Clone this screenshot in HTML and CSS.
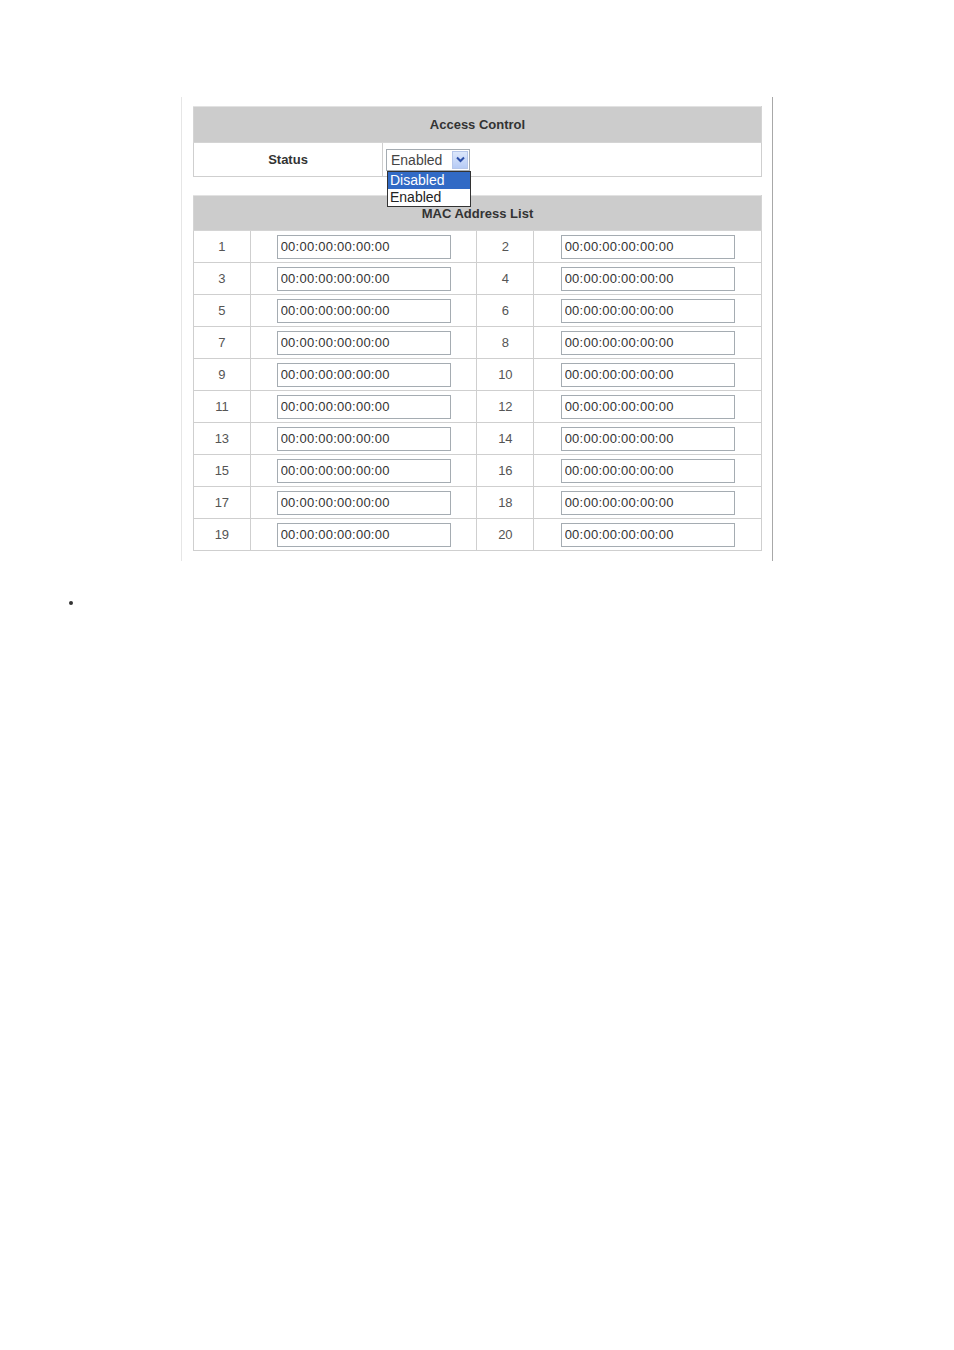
FILE: index.html
```html
<!DOCTYPE html>
<html lang="en">
<head>
    <meta charset="UTF-8">
    <meta name="viewport" content="width=device-width, initial-scale=1.0">
    <title>Access Control</title>
    <link rel="stylesheet" href="styles.css">
</head>
<body>
    <div class="frame">
        <table class="grid status-table">
            <tr>
                <th colspan="2">Access Control</th>
            </tr>
            <tr>
                <td class="label">Status</td>
                <td class="value">
                    <div class="select">
                        <span class="select-text">Enabled</span>
                        <span class="select-btn">
                            <svg width="9" height="7" viewBox="0 0 9 7">
                                <path d="M1 1.5 L4.5 5 L8 1.5" fill="none" stroke="#2b4ea8" stroke-width="2"/>
                            </svg>
                        </span>
                        <div class="select-list">
                            <div class="option selected">Disabled</div>
                            <div class="option">Enabled</div>
                        </div>
                    </div>
                </td>
            </tr>
        </table>

        <table class="grid mac-table">
            <colgroup>
                <col class="c-num">
                <col class="c-mac">
                <col class="c-num">
                <col class="c-mac2">
            </colgroup>
            <thead>
                <tr>
                    <th colspan="4">MAC Address List</th>
                </tr>
            </thead>
            <tbody id="macRows">
                <tr><td>1</td><td><input type="text" value="00:00:00:00:00:00"></td><td>2</td><td><input type="text" value="00:00:00:00:00:00"></td></tr>
                <tr><td>3</td><td><input type="text" value="00:00:00:00:00:00"></td><td>4</td><td><input type="text" value="00:00:00:00:00:00"></td></tr>
                <tr><td>5</td><td><input type="text" value="00:00:00:00:00:00"></td><td>6</td><td><input type="text" value="00:00:00:00:00:00"></td></tr>
                <tr><td>7</td><td><input type="text" value="00:00:00:00:00:00"></td><td>8</td><td><input type="text" value="00:00:00:00:00:00"></td></tr>
                <tr><td>9</td><td><input type="text" value="00:00:00:00:00:00"></td><td>10</td><td><input type="text" value="00:00:00:00:00:00"></td></tr>
                <tr><td>11</td><td><input type="text" value="00:00:00:00:00:00"></td><td>12</td><td><input type="text" value="00:00:00:00:00:00"></td></tr>
                <tr><td>13</td><td><input type="text" value="00:00:00:00:00:00"></td><td>14</td><td><input type="text" value="00:00:00:00:00:00"></td></tr>
                <tr><td>15</td><td><input type="text" value="00:00:00:00:00:00"></td><td>16</td><td><input type="text" value="00:00:00:00:00:00"></td></tr>
                <tr><td>17</td><td><input type="text" value="00:00:00:00:00:00"></td><td>18</td><td><input type="text" value="00:00:00:00:00:00"></td></tr>
                <tr><td>19</td><td><input type="text" value="00:00:00:00:00:00"></td><td>20</td><td><input type="text" value="00:00:00:00:00:00"></td></tr>
            </tbody>
        </table>
    </div>

    <ul class="notes">
        <li>&nbsp;</li>
    </ul>
</body>
</html>
```

FILE: styles.css
```css
body {
    font-family: "Liberation Sans", Arial, sans-serif;
    margin: 0;
    padding: 0;
    background-color: #fff;
    color: #333;
}

.frame {
    margin: 97px 0 0 181px;
    padding: 9px 10px 10px 11px;
    box-sizing: border-box;
    width: 592px;
    border-left: 1px solid #e6e6e6;
    border-right: 1px solid #a8a8a8;
}

.grid {
    width: 569px;
    border-collapse: collapse;
    font-size: 13px;
}

.grid th {
    background-color: #cccccc;
    color: #333;
    font-weight: bold;
    height: 36px;
    padding: 0;
    border: 1px solid #d4d4d4;
    border-top-color: #e2e2e2;
    box-sizing: border-box;
}

.grid td {
    border: 1px solid #cfcfcf;
    padding: 0;
    text-align: center;
}

.status-table td {
    height: 34px;
    box-sizing: border-box;
}

.status-table .label {
    width: 189px;
    font-weight: bold;
}

.status-table .value {
    text-align: left;
    padding-left: 3px;
    border-left-color: #999;
}

.select {
    position: relative;
    width: 84px;
    height: 22px;
    border: 1px solid #a5acb2;
    box-sizing: border-box;
    display: flex;
    align-items: center;
    font-size: 14px;
    color: #444;
}

.select-text {
    flex: 1;
    padding-left: 4px;
}

.select-btn {
    width: 16px;
    height: 18px;
    margin-right: 1px;
    background: linear-gradient(#dce7fb, #b6cbf5);
    border: 1px solid #b5c6ea;
    box-sizing: border-box;
    display: flex;
    align-items: center;
    justify-content: center;
}

.select-list {
    position: absolute;
    top: 21px;
    left: 0;
    width: 84px;
    border: 1px solid #333;
    box-sizing: border-box;
    background-color: #fff;
    z-index: 2;
}

.option {
    height: 17px;
    line-height: 17px;
    padding-left: 2px;
    color: #222;
}

.option.selected {
    background-color: #316ac5;
    color: #fff;
}

.mac-table {
    margin-top: 18px;
}

.mac-table th {
    height: 35px;
}

.mac-table .c-num {
    width: 57px;
}

.mac-table .c-mac {
    width: 227px;
}

.mac-table .c-mac2 {
    width: 228px;
}

.mac-table td {
    height: 32px;
    box-sizing: border-box;
    color: #555;
}

.mac-table input {
    width: 174px;
    height: 24px;
    box-sizing: border-box;
    border: 1px solid #a5acb2;
    padding: 0 3px;
    font-family: "Liberation Sans", Arial, sans-serif;
    font-size: 13px;
    letter-spacing: 0.25px;
    color: #333;
    display: block;
    margin: 0 auto;
}

.notes {
    margin: 34px 0 0 0;
    padding-left: 83px;
    font-size: 12px;
}
```
